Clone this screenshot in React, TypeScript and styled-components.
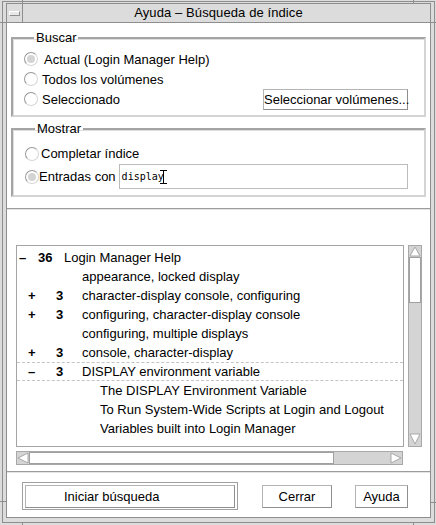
import React from "react";
import styled, { createGlobalStyle } from "styled-components";

const Global = createGlobalStyle`
  html, body { margin: 0; padding: 0; background: #ffffff; }
  body { font-family: "Liberation Sans", Arial, sans-serif; font-size: 13px; color: #000; }
  * { box-sizing: border-box; }
`;

const Window = styled.div`
  position: relative;
  width: 436px;
  height: 525px;
  background: #dcdcdc;
  padding: 1px 1px 2px 2px;
  display: flex;
`;

const Notch = styled.span<{ $v?: boolean }>`
  position: absolute;
  background: #8e8e8e;
  width: ${(p) => (p.$v ? "1px" : "6px")};
  height: ${(p) => (p.$v ? "3px" : "1px")};
`;

const Frame = styled.div`
  flex: 1;
  border: 1px solid #8e8e8e;
  padding: 1px 3px 4px 3px;
  display: flex;
  flex-direction: column;
  min-height: 0;
`;

const TitleBar = styled.div`
  height: 20px;
  border: 1px solid #8e8e8e;
  background: #dcdcdc;
  display: grid;
  grid-template-columns: 16px 1fr 16px;
  align-items: stretch;
`;

const MenuButton = styled.div`
  border-right: 1px solid #8e8e8e;
  display: flex;
  align-items: center;
  justify-content: center;
  &::after {
    content: "";
    width: 9px;
    height: 3px;
    background: #e8e8e8;
    border: 1px solid;
    border-color: #ffffff #8e8e8e #8e8e8e #ffffff;
  }
`;

const Title = styled.div`
  text-align: center;
  line-height: 18px;
  font-size: 13px;
  letter-spacing: 0.1px;
`;

const Body = styled.div`
  flex: 1;
  background: #ffffff;
  border: 1px solid #8e8e8e;
  border-top: none;
  display: flex;
  flex-direction: column;
  min-height: 0;
`;

const Group = styled.fieldset<{ $top: number; $pad: string }>`
  margin: ${(p) => p.$top}px 4px 0 4px;
  padding: ${(p) => p.$pad};
  border: 2px solid;
  border-color: #a4a4a4 #d4d4d4 #d4d4d4 #a4a4a4;
  box-shadow: inset 1px 1px 0 #dedede;
  min-width: 0;
  display: flex;
  flex-direction: column;
`;

const Legend = styled.legend`
  padding: 0 2px;
  margin-left: 10px;
  line-height: 15px;
  font-size: 13px;
`;

const OptionRow = styled.div<{ $h: number }>`
  height: ${(p) => p.$h}px;
  display: flex;
  align-items: center;
  justify-content: space-between;
`;

const Option = styled.label<{ $gap: number }>`
  display: flex;
  align-items: center;
  gap: ${(p) => p.$gap}px;
  white-space: nowrap;
`;

const Radio = styled.span<{ $on?: boolean }>`
  flex: none;
  width: 14px;
  height: 14px;
  border-radius: 50%;
  border: 1px solid;
  border-color: #9a9a9a #d6d6d6 #d6d6d6 #9a9a9a;
  background: #ffffff;
  display: inline-flex;
  align-items: center;
  justify-content: center;
  &::after {
    content: "";
    width: 8px;
    height: 8px;
    border-radius: 50%;
    background: ${(p) => (p.$on ? "#d4d4d4" : "transparent")};
  }
`;

const PushButton = styled.button<{ $w: number; $h: number; $align?: string; $pl?: number }>`
  width: ${(p) => p.$w}px;
  height: ${(p) => p.$h}px;
  padding: 0 0 0 ${(p) => p.$pl ?? 0}px;
  text-align: ${(p) => p.$align ?? "center"};
  background: #ffffff;
  border: 1px solid;
  border-color: #b4b4b4 #8e8e8e #8e8e8e #b4b4b4;
  font-family: "Liberation Sans", Arial, sans-serif;
  font-size: 13px;
  color: #000;
  white-space: nowrap;
  flex: none;
`;

const DefaultRing = styled.div`
  border: 1px solid #a0a0a0;
  padding: 2px 2px 1px 2px;
  display: flex;
  flex: none;
`;

const InputWrap = styled.div`
  position: relative;
  flex: 1;
  height: 25px;
  margin-left: 3px;
  border: 1px solid #bcbcbc;
  display: flex;
  align-items: center;
  padding-left: 2px;
  font-family: "DejaVu Sans Mono", "Liberation Mono", monospace;
  font-size: 10px;
`;

const IBeam = styled.svg`
  position: absolute;
  left: 40px;
  top: 5px;
`;

const Separator = styled.div<{ $top: number }>`
  margin-top: ${(p) => p.$top}px;
  height: 2px;
  border-top: 1px solid #9c9c9c;
  border-bottom: 1px solid #e4e4e4;
  flex: none;
`;

const ListSection = styled.div`
  margin-top: 35px;
  padding: 0 8px 0 9px;
  display: flex;
  flex-direction: column;
  gap: 4px;
`;

const ListRow = styled.div`
  display: flex;
  gap: 4px;
  height: 202px;
`;

const ListBox = styled.div`
  flex: 1;
  border: 1px solid #a4a4a4;
  padding-top: 2px;
  overflow: hidden;
`;

const Entry = styled.div<{ $level: number; $focus?: boolean }>`
  height: 19px;
  line-height: 17px;
  border: 1px dashed ${(p) => (p.$focus ? "#c4c4c4" : "transparent")};
  border-left: none;
  border-right: none;
  padding-left: ${(p) => 2 + 9 * p.$level}px;
  display: grid;
  grid-template-columns: ${(p) => 19 + 9 * p.$level}px 26px 1fr;
  white-space: nowrap;
`;

const Sign = styled.span`
  font-weight: bold;
`;

const Count = styled.span`
  font-weight: bold;
`;

const VScroll = styled.div`
  width: 14px;
  border: 1px solid #a8a8a8;
  background: #d4d4d4;
  display: flex;
  flex-direction: column;
`;

const HScroll = styled.div`
  height: 14px;
  width: 387px;
  border: 1px solid #a8a8a8;
  background: #d4d4d4;
  display: flex;
`;

const Arrow = styled.svg`
  flex: none;
  display: block;
`;

const Thumb = styled.div<{ $w?: number; $h?: number }>`
  flex: none;
  background: #ffffff;
  border: 1px solid #a0a0a0;
  width: ${(p) => (p.$w ? `${p.$w}px` : "auto")};
  height: ${(p) => (p.$h ? `${p.$h}px` : "auto")};
`;

const Trough = styled.div`
  flex: 1;
`;

const ButtonRow = styled.div`
  margin-top: 9px;
  padding-left: 15px;
  display: flex;
  align-items: center;
`;

const Gap = styled.div<{ $w: number }>`
  width: ${(p) => p.$w}px;
  flex: none;
`;

type Item = { level: number; sign?: string; count?: string; label: string; focus?: boolean };

const items: Item[] = [
  { level: 0, sign: "–", count: "36", label: "Login Manager Help" },
  { level: 1, label: "appearance, locked display" },
  { level: 1, sign: "+", count: "3", label: "character-display console, configuring" },
  { level: 1, sign: "+", count: "3", label: "configuring, character-display console" },
  { level: 1, label: "configuring, multiple displays" },
  { level: 1, sign: "+", count: "3", label: "console, character-display" },
  { level: 1, sign: "–", count: "3", label: "DISPLAY environment variable", focus: true },
  { level: 2, label: "The DISPLAY Environment Variable" },
  { level: 2, label: "To Run System-Wide Scripts at Login and Logout" },
  { level: 2, label: "Variables built into Login Manager" },
];

export default function App() {
  return (
    <>
      <Global />
      <Window>
        <Notch $v style={{ left: 22, top: 0 }} />
        <Notch $v style={{ left: 413, top: 0 }} />
        <Notch style={{ left: 0, top: 22 }} />
        <Notch style={{ left: 430, top: 22 }} />
        <Notch $v style={{ left: 22, top: 522 }} />
        <Notch $v style={{ left: 413, top: 522 }} />
        <Notch style={{ left: 0, top: 501 }} />
        <Notch style={{ left: 430, top: 502 }} />
        <Frame>
          <TitleBar>
            <MenuButton />
            <Title>Ayuda – Búsqueda de índice</Title>
            <span />
          </TitleBar>
          <Body>
            <Group $top={7} $pad="4px 16px 6px 11px">
              <Legend>Buscar</Legend>
              <OptionRow $h={20}>
                <Option $gap={6}>
                  <Radio $on />
                  Actual (Login Manager Help)
                </Option>
              </OptionRow>
              <OptionRow $h={20}>
                <Option $gap={4}>
                  <Radio />
                  Todos los volúmenes
                </Option>
              </OptionRow>
              <OptionRow $h={20}>
                <Option $gap={4}>
                  <Radio />
                  Seleccionado
                </Option>
                <PushButton $w={145} $h={21}>Seleccionar volúmenes...</PushButton>
              </OptionRow>
            </Group>
            <Group $top={4} $pad="7px 16px 6px 12px">
              <Legend>Mostrar</Legend>
              <OptionRow $h={21}>
                <Option $gap={2}>
                  <Radio />
                  Completar índice
                </Option>
              </OptionRow>
              <OptionRow $h={25}>
                <Option $gap={0}>
                  <Radio $on />
                  Entradas con
                </Option>
                <InputWrap>
                  display
                  <IBeam width="7" height="14" viewBox="0 0 7 14">
                    <path d="M0 0.5h7M0 13.5h7M3.5 0.5v13" stroke="#000" strokeWidth="1" fill="none" />
                  </IBeam>
                </InputWrap>
              </OptionRow>
            </Group>
            <Separator $top={11} />
            <ListSection>
              <ListRow>
                <ListBox>
                  {items.map((it, i) => (
                    <Entry key={i} $level={it.level} $focus={it.focus}>
                      <Sign>{it.sign ?? ""}</Sign>
                      <Count>{it.count ?? ""}</Count>
                      <span>{it.label}</span>
                    </Entry>
                  ))}
                </ListBox>
                <VScroll>
                  <Arrow width="12" height="11" viewBox="0 0 12 11">
                    <polygon points="6,1 11,10 1,10" fill="#ffffff" stroke="#a8a8a8" strokeWidth="1" />
                  </Arrow>
                  <Thumb $h={46} />
                  <Trough />
                  <Arrow width="12" height="14" viewBox="0 0 12 14">
                    <polygon points="1,2 11,2 6,12" fill="#ffffff" stroke="#a8a8a8" strokeWidth="1" />
                  </Arrow>
                </VScroll>
              </ListRow>
              <HScroll>
                <Arrow width="12" height="12" viewBox="0 0 12 12">
                  <polygon points="1,6 11,1 11,11" fill="#ffffff" stroke="#a8a8a8" strokeWidth="1" />
                </Arrow>
                <Thumb $w={305} />
                <Trough />
                <Arrow width="12" height="12" viewBox="0 0 12 12">
                  <polygon points="11,6 1,1 1,11" fill="#ffffff" stroke="#a8a8a8" strokeWidth="1" />
                </Arrow>
              </HScroll>
            </ListSection>
            <Separator $top={6} />
            <ButtonRow>
              <DefaultRing>
                <PushButton $w={210} $h={23} $align="left" $pl={38}>
                  Iniciar búsqueda
                </PushButton>
              </DefaultRing>
              <Gap $w={24} />
              <PushButton $w={70} $h={23}>Cerrar</PushButton>
              <Gap $w={23} />
              <PushButton $w={53} $h={23}>Ayuda</PushButton>
            </ButtonRow>
          </Body>
        </Frame>
      </Window>
    </>
  );
}
